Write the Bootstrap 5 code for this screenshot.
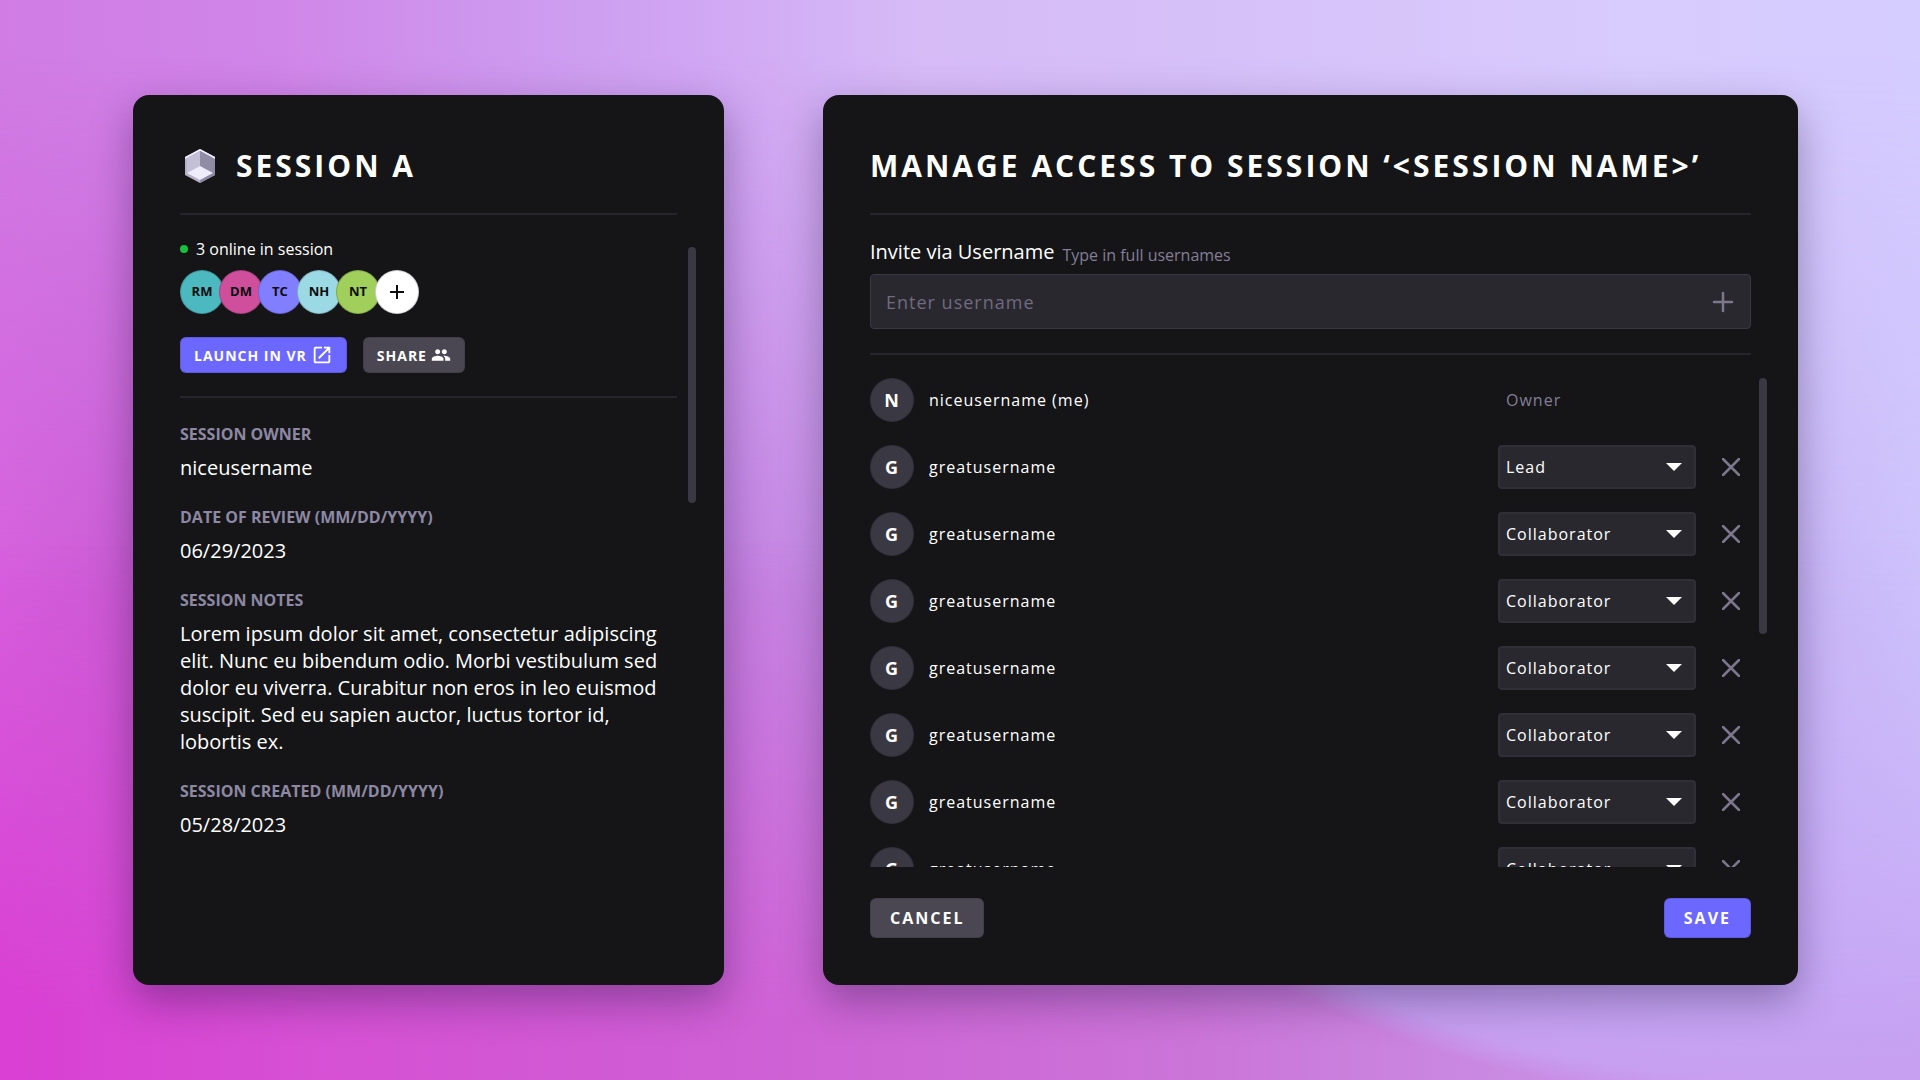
<!DOCTYPE html>
<html lang="en">
<head>
<meta charset="utf-8">
<meta name="viewport" content="width=device-width, initial-scale=1">
<title>Session access</title>
<link href="https://cdn.jsdelivr.net/npm/bootstrap@5.3.0/dist/css/bootstrap.min.css" rel="stylesheet">
<style>
  :root { --step: 23px; }
  body { font-family: "Open Sans", "Noto Sans", sans-serif; color: #fff; background: #c99aec; }

  /* Backdrop: three horizontal colour ramps blended from top to bottom */
  .scene {
    position: relative; z-index: 0; overflow: hidden;
    padding: 95px 122px 95px 133px; gap: 99px;
    background: linear-gradient(90deg, #d07ce4 0%, #d085e8 14%, #cd9bef 28%, #d0a6f3 36%, #d6bbf7 48%, #d6c0f8 62%, #d8cbfd 85%, #d5ccff 100%);
  }
  .scene::before, .scene::after { content: ""; position: absolute; inset: 0; z-index: -1; }
  .scene::before {
    background: linear-gradient(90deg, #d660dd 0%, #c95bd3 7%, #c27fdf 38%, #c78ee6 44%, #c8b6f6 94%, #cdc2fc 100%);
    -webkit-mask-image: linear-gradient(180deg, transparent 5%, #000 55%);
    mask-image: linear-gradient(180deg, transparent 5%, #000 55%);
  }
  .scene::after {
    background:
      radial-gradient(ellipse 816px 530px at 1800px 576px, #c8b0f8 0%, #c6a5f4 80%, #c79ff1 95%, transparent 100%),
      linear-gradient(90deg, #d93fd3 0%, #d650d4 16%, #d05ad4 32%, #cd68d6 48%, #cb74d8 62%, #c98ae2 78%, #c5a2f0 100%);
    -webkit-mask-image: linear-gradient(180deg, transparent 50%, #000 94%);
    mask-image: linear-gradient(180deg, transparent 50%, #000 94%);
  }

  .panel { background: #151517; border-radius: 16px; padding: 47px; box-shadow: 0 16px 40px rgba(20, 10, 50, .34); min-width: 0; }
  .panel-session { flex: 591 1 591px; }
  .panel-access { flex: 975 1 975px; }
  .panel-title { font-size: 30px; line-height: 48px; font-weight: 700; letter-spacing: 3px; text-transform: uppercase; white-space: nowrap; }
  .rule { height: 2px; background: #26252c; flex: none; }
  .thumb { width: 8px; height: 256px; border-radius: 4px; background: #3a3843; flex: none; }
  .step-top { margin-top: var(--step); }

  .with-thumb { margin-right: -19px; gap: 11px; }
  .with-thumb .thumb { margin-top: 32px; }
  .online { font-size: 16px; line-height: 22px; margin-bottom: 10px; }
  .online-dot { width: 8px; height: 8px; border-radius: 50%; background: #17c13e; }
  .avatar { width: 44px; height: 44px; border-radius: 50%; flex: none; font-weight: 700; border: 1px solid rgba(21, 21, 23, .2); }
  .avatar-sm { color: #0d0d0f; font-size: 13px; margin-right: -5px; padding: 0; }
  .avatar-user { background: #3a3843; font-size: 18px; }

  .btn-tool, .btn-main { color: #fff; font-weight: 700; text-transform: uppercase; border-radius: 6px; border: 1px solid rgba(21, 21, 23, .15); }
  .btn-tool { font-size: 14px; height: 36px; padding: 0 13px; letter-spacing: 1px; gap: 4px; }
  .btn-main { font-size: 16px; height: 40px; padding: 0 19px; letter-spacing: 2px; }
  .btn-violet, .btn-violet:hover { background: #6b67ff; color: #fff; }
  .btn-slate, .btn-slate:hover { background: #4a4753; color: #fff; }

  .facts { gap: 25px; margin-top: 25px; }
  .facts dt { font-size: 16px; line-height: 22px; font-weight: 700; color: #8d88a3; margin-bottom: 9px; text-transform: uppercase; }
  .facts dd { font-size: 20px; line-height: 27px; margin: 0; }

  .invite-label { font-size: 20px; line-height: 28px; }
  .invite-hint { font-size: 16px; line-height: 22px; color: #837e96; }
  .invite-box { background: #29282e; border: 1px solid #3a3843; border-radius: 4px; height: 55px; }
  .invite-box input { background: transparent; border: 0; color: #fff; font-size: 18px; letter-spacing: 1px; padding: 0 15px; }
  .invite-box input:focus { background: transparent; color: #fff; box-shadow: none; }
  .invite-box input::placeholder { color: #6f6b80; }
  .icon-btn { border: 0; background: none; padding: 0; color: #7c778c; line-height: 0; }

  .people-wrap { flex: 1 1 0; min-height: 0; gap: 8px; margin-right: -16px; }
  .people { gap: var(--step); overflow: hidden; min-width: 0; }
  .person { gap: 15px; font-size: 16px; flex: none; letter-spacing: 1px; }
  .role { width: 198px; height: 44px; margin-right: 11px; flex: none; }
  .role-text { padding-left: 8px; line-height: 44px; color: #837e96; }
  select.role {
    color: #fff; font-size: 16px; letter-spacing: 1px; border: 2px solid #302e37; border-radius: 4px; padding: 0 40px 0 6px;
    background: #29282e url("data:image/svg+xml,%3Csvg xmlns='http://www.w3.org/2000/svg' viewBox='0 0 16 8'%3E%3Cpath d='M0 0h16L8 8z' fill='%23fff'/%3E%3C/svg%3E") no-repeat right 12px center / 16px 8px;
  }
  .remove { width: 18px; margin-right: 11px; }
  .actions { margin-top: 31px; }
</style>
</head>
<body>
<main class="scene d-flex vh-100">

  <section class="panel panel-session d-flex flex-column">
    <div class="d-flex align-items-center">
      <svg width="40" height="40" viewBox="0 0 40 40" aria-hidden="true">
        <path d="M20 3 35 11v18L20 37 5 29V11z" fill="#b6b1c9"/>
        <path d="M20 3 35 11v18L20 37z" fill="#8d88a3"/>
        <path d="M20 3 35 11v2L20 5 5 13v-2z" fill="#f0eefa"/>
        <path d="M7 12 20 5v15L7 27z" fill="#c3bfd4"/>
        <path d="M20 5 33 12v15L20 20z" fill="#918ca6"/>
        <path d="M20 20 33 27 20 34 7 27z" fill="#efedfb"/>
      </svg>
      <h1 class="panel-title mb-0 ms-3">Session A</h1>
    </div>
    <div class="rule step-top"></div>
    <div class="with-thumb d-flex">
      <div class="flex-grow-1">
        <div class="online step-top d-flex align-items-center gap-2"><span class="online-dot"></span>3 online in session</div>
        <div class="d-flex">
          <span class="avatar avatar-sm d-flex align-items-center justify-content-center" style="background:#4bb9bf">RM</span>
          <span class="avatar avatar-sm d-flex align-items-center justify-content-center" style="background:#cf4f9d">DM</span>
          <span class="avatar avatar-sm d-flex align-items-center justify-content-center" style="background:#817eff">TC</span>
          <span class="avatar avatar-sm d-flex align-items-center justify-content-center" style="background:#9bd9e4">NH</span>
          <span class="avatar avatar-sm d-flex align-items-center justify-content-center" style="background:#a0cf5b">NT</span>
          <button type="button" class="avatar avatar-sm d-flex align-items-center justify-content-center bg-white" aria-label="Add person">
            <svg width="14" height="14" viewBox="0 0 14 14" fill="none" stroke="#0d0d0f" stroke-width="2"><path d="M7 0v14M0 7h14"/></svg>
          </button>
        </div>
        <div class="d-flex gap-3 step-top">
          <button type="button" class="btn btn-tool btn-violet d-flex align-items-center">Launch in VR
            <svg width="22" height="22" viewBox="0 0 24 24" fill="#fff"><path d="M19 19H5V5h7V3H5a2 2 0 0 0-2 2v14a2 2 0 0 0 2 2h14c1.100 0 2-.900 2-2v-7h-2zM14 3v2h3.590l-9.830 9.830 1.410 1.410L19 6.410V10h2V3z"/></svg>
          </button>
          <button type="button" class="btn btn-tool btn-slate d-flex align-items-center">Share
            <svg width="20" height="20" viewBox="0 0 24 24" fill="#fff"><path d="M16 11c1.660 0 3-1.340 3-3s-1.340-3-3-3-3 1.340-3 3 1.340 3 3 3zm-8 0c1.660 0 3-1.340 3-3S9.660 5 8 5 5 6.340 5 8s1.340 3 3 3zm0 2c-2.330 0-7 1.170-7 3.500V19h14v-2.500C15 14.170 10.330 13 8 13zm8 0c-.290 0-.620.020-.970.050A4.200 4.200 0 0 1 17 16.500V19h6v-2.500c0-2.330-4.670-3.500-7-3.500z"/></svg>
          </button>
        </div>
        <div class="rule step-top"></div>
        <dl class="facts d-flex flex-column mb-0">
          <div><dt>Session owner</dt><dd>niceusername</dd></div>
          <div><dt>Date of review (MM/DD/YYYY)</dt><dd>06/29/2023</dd></div>
          <div><dt>Session notes</dt><dd class="pe-2">Lorem ipsum dolor sit amet, consectetur adipiscing elit. Nunc eu bibendum odio. Morbi vestibulum sed dolor eu viverra. Curabitur non eros in leo euismod suscipit. Sed eu sapien auctor, luctus tortor id, lobortis ex.</dd></div>
          <div><dt>Session created (MM/DD/YYYY)</dt><dd>05/28/2023</dd></div>
        </dl>
      </div>
      <div class="thumb"></div>
    </div>
  </section>

  <section class="panel panel-access d-flex flex-column">
    <h2 class="panel-title mb-0">Manage access to session ‘&lt;Session name&gt;’</h2>
    <div class="rule step-top"></div>
    <div class="d-flex align-items-end gap-2 step-top mb-2">
      <label class="invite-label" for="invite">Invite via Username</label>
      <span class="invite-hint">Type in full usernames</span>
    </div>
    <div class="invite-box d-flex align-items-center">
      <input id="invite" class="form-control h-100" type="text" placeholder="Enter username">
      <button type="button" class="icon-btn me-3" aria-label="Add username">
        <svg width="22" height="22" viewBox="0 0 22 22" fill="none" stroke="currentColor" stroke-width="2.500" stroke-linecap="round"><path d="M11 2v18M2 11h18"/></svg>
      </button>
    </div>
    <div class="rule mt-4"></div>
    <div class="people-wrap d-flex step-top">
      <div class="people flex-grow-1 d-flex flex-column" id="people">
        <div class="person d-flex align-items-center">
          <span class="avatar avatar-user d-flex align-items-center justify-content-center">N</span>
          <span class="flex-grow-1">niceusername (me)</span>
          <span class="role role-text">Owner</span>
          <span class="remove"></span>
        </div>
      </div>
      <div class="thumb"></div>
    </div>
    <div class="actions d-flex justify-content-between">
      <button type="button" class="btn btn-main btn-slate">Cancel</button>
      <button type="button" class="btn btn-main btn-violet">Save</button>
    </div>
  </section>

</main>
<script src="https://cdn.jsdelivr.net/npm/bootstrap@5.3.0/dist/js/bootstrap.bundle.min.js"></script>
<script>
  const roles = ["Lead", "Collaborator"];
  const members = ["Lead", ...Array(6).fill("Collaborator")];
  document.getElementById("people").insertAdjacentHTML("beforeend", members.map(role => `
    <div class="person d-flex align-items-center">
      <span class="avatar avatar-user d-flex align-items-center justify-content-center">G</span>
      <span class="flex-grow-1">greatusername</span>
      <select class="form-select role" aria-label="Role">${roles.map(r => `<option${r === role ? " selected" : ""}>${r}</option>`).join("")}</select>
      <button type="button" class="icon-btn remove" aria-label="Remove">
        <svg width="18" height="18" viewBox="0 0 18 18" fill="none" stroke="currentColor" stroke-width="2.500" stroke-linecap="round"><path d="M1 1l16 16M17 1 1 17"/></svg>
      </button>
    </div>`).join(""));
</script>
</body>
</html>
